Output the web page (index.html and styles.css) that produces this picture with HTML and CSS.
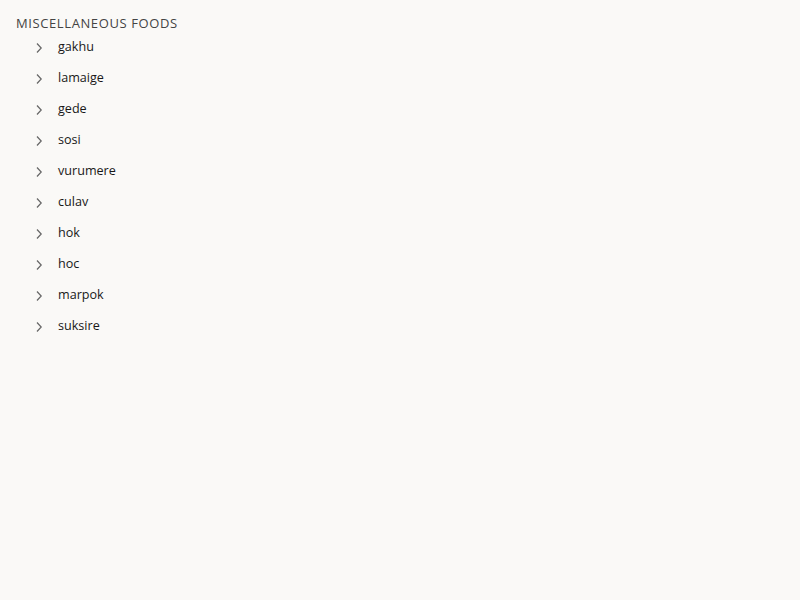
FILE: index.html
```html
<!DOCTYPE html>
<html>
<head>
<meta charset="utf-8">
<link rel="stylesheet" href="styles.css">
</head>
<body>
<div class="panel">
  <div class="heading">Miscellaneous Foods</div>
  <ul class="list">
    <li class="item"><svg class="chev" viewBox="0 0 8 12"><path d="M2 1.5l4.2 4.5-4.2 4.5"/></svg><span>gakhu</span></li>
    <li class="item"><svg class="chev" viewBox="0 0 8 12"><path d="M2 1.5l4.2 4.5-4.2 4.5"/></svg><span>lamaige</span></li>
    <li class="item"><svg class="chev" viewBox="0 0 8 12"><path d="M2 1.5l4.2 4.5-4.2 4.5"/></svg><span>gede</span></li>
    <li class="item"><svg class="chev" viewBox="0 0 8 12"><path d="M2 1.5l4.2 4.5-4.2 4.5"/></svg><span>sosi</span></li>
    <li class="item"><svg class="chev" viewBox="0 0 8 12"><path d="M2 1.5l4.2 4.5-4.2 4.5"/></svg><span>vurumere</span></li>
    <li class="item"><svg class="chev" viewBox="0 0 8 12"><path d="M2 1.5l4.2 4.5-4.2 4.5"/></svg><span>culav</span></li>
    <li class="item"><svg class="chev" viewBox="0 0 8 12"><path d="M2 1.5l4.2 4.5-4.2 4.5"/></svg><span>hok</span></li>
    <li class="item"><svg class="chev" viewBox="0 0 8 12"><path d="M2 1.5l4.2 4.5-4.2 4.5"/></svg><span>hoc</span></li>
    <li class="item"><svg class="chev" viewBox="0 0 8 12"><path d="M2 1.5l4.2 4.5-4.2 4.5"/></svg><span>marpok</span></li>
    <li class="item"><svg class="chev" viewBox="0 0 8 12"><path d="M2 1.5l4.2 4.5-4.2 4.5"/></svg><span>suksire</span></li>
  </ul>
</div>
</body>
</html>
```

FILE: styles.css
```css
html, body {
  margin: 0;
  padding: 0;
  background: #faf9f7;
  font-family: "Open Sans", "Noto Sans", sans-serif;
  color: #181818;
}
.panel {
  padding: 15px 16px;
}
.heading {
  font-size: 13px;
  line-height: 16px;
  text-transform: uppercase;
  letter-spacing: 0.6px;
  color: #444;
}
.list {
  list-style: none;
  margin: 0;
  padding: 0;
}
.item {
  display: flex;
  align-items: center;
  height: 31px;
  font-size: 12.6px;
}
.chev {
  width: 8px;
  height: 12px;
  margin-top: 2px;
  margin-left: 19px;
  margin-right: 15px;
  fill: none;
  stroke: #666;
  stroke-width: 1.2;
}
```
